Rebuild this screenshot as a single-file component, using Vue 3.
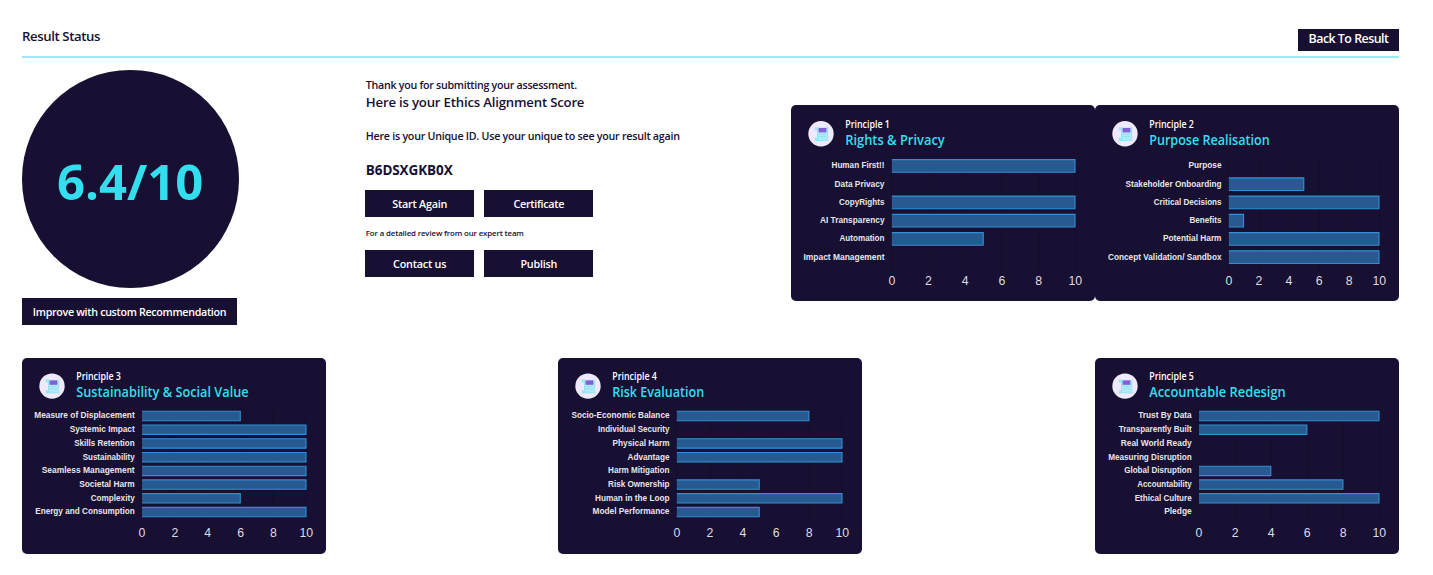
<script setup>
const ticks = [0, 2, 4, 6, 8, 10]
const END = 284.3

const rows = (pairs) => pairs.map(([label, value, width]) => ({ label, value, width }))

const principles = [
  { id: 1, title: 'Rights & Privacy', width: 99.5, start: 100.8, items: rows([
    ['Human First!!', 10, 53], ['Data Privacy', 0, 50], ['CopyRights', 10, 45.5],
    ['AI Transparency', 10, 64.5], ['Automation', 5, 45], ['Impact Management', 0, 81]]) },
  { id: 2, title: 'Purpose Realisation', width: 120.5, start: 133.8, items: rows([
    ['Purpose', 0, 33], ['Stakeholder Onboarding', 5, 96], ['Critical Decisions', 10, 67.7],
    ['Benefits', 1, 32], ['Potential Harm', 10, 58.5], ['Concept Validation/ Sandbox', 10, 113.5]]) },
  { id: 3, title: 'Sustainability & Social Value', width: 172.5, start: 120, items: rows([
    ['Measure of Displacement', 6, 100.5], ['Systemic Impact', 10, 65], ['Skills Retention', 10, 60.5],
    ['Sustainability', 10, 52], ['Seamless Management', 10, 93], ['Societal Harm', 10, 55.5],
    ['Complexity', 6, 44], ['Energy and Consumption', 10, 99.5]]) },
  { id: 4, title: 'Risk Evaluation', width: 92, start: 118.8, items: rows([
    ['Socio-Economic Balance', 8, 98], ['Individual Security', 0, 71.5], ['Physical Harm', 10, 57],
    ['Advantage', 10, 42], ['Harm Mitigation', 0, 61.5], ['Risk Ownership', 5, 61.5],
    ['Human in the Loop', 10, 74.5], ['Model Performance', 5, 77]]) },
  { id: 5, title: 'Accountable Redesign', width: 136.5, start: 104, items: rows([
    ['Trust By Data', 10, 53.5], ['Transparently Built', 6, 73], ['Real World Ready', 0, 71],
    ['Measuring Disruption', 0, 83.5], ['Global Disruption', 4, 67.5], ['Accountability', 8, 54.5],
    ['Ethical Culture', 10, 57], ['Pledge', 0, 27.5]]) },
].map((p) => {
  const dense = p.items.length > 6
  return {
    ...p,
    top: dense ? 0.6 : 0,
    first: dense ? 58.6 : 60.9,
    pitch: dense ? 13.72 : 18.25,
    thick: dense ? 9.4 : 12.6,
  }
})

const groups = [
  { name: 'upper', cards: principles.slice(0, 2) },
  { name: 'lower', cards: principles.slice(2) },
]

const px = (p, v) => p.start + ((END - p.start) * v) / 10
const cy = (p, i) => p.first + p.pitch * i
const barPath = (p, item, i) => {
  const t = cy(p, i) - p.thick / 2
  return `M${p.start} ${t}H${px(p, item.value) - 0.3}V${t + p.thick}H${p.start}`
}
</script>

<template>
  <main class="page">
    <header class="top">
      <h1><span>Result Status</span></h1>
      <button class="btn back"><span>Back To Result</span></button>
    </header>

    <div class="content">
      <section class="score">
        <div class="circle"><span>6.4/10</span></div>
        <button class="btn improve"><span>Improve with custom Recommendation</span></button>
      </section>

      <section class="info">
        <p class="thanks"><span>Thank you for submitting your assessment.</span></p>
        <p class="lead"><span>Here is your Ethics Alignment Score</span></p>
        <p class="hint"><span>Here is your Unique ID. Use your unique to see your result again</span></p>
        <p class="code"><span>B6DSXGKB0X</span></p>
        <div class="actions">
          <button class="btn start"><span>Start Again</span></button>
          <button class="btn cert"><span>Certificate</span></button>
        </div>
        <p class="review"><span>For a detailed review from our expert team</span></p>
        <div class="actions">
          <button class="btn contact"><span>Contact us</span></button>
          <button class="btn publish"><span>Publish</span></button>
        </div>
      </section>

      <section v-for="g in groups" :key="g.name" :class="g.name">
        <article v-for="p in g.cards" :key="p.id" class="card">
          <svg class="chart" width="304" height="196" :viewBox="`0 ${p.top} 304 196`">
            <circle cx="30" cy="28.7" r="12.7" fill="#f0e8fd" />
            <g>
              <path d="M24 22.3h12.4v11.2h1v2.2H26.6v-10.4H24z" fill="#b5e9f8" />
              <path d="M23.7 22.2h3v2.9h-3zM23.7 32.8h3v3h-3z" fill="#9de9f5" />
              <path d="M26.5 22.3v13.2M36.7 22.3v11.5M24 35.4h13.4" fill="none" stroke="#8fe5f2" stroke-width="1" />
              <rect x="27.6" y="23" width="7.8" height="4.4" fill="#8160d8" />
              <path d="M27.5 29.2h7.5M27.5 31.6h7.5" stroke="#93def0" stroke-width=".9" />
            </g>
            <text class="num" x="54.2" y="22.8" textLength="44.7" lengthAdjust="spacingAndGlyphs">Principle {{ p.id }}</text>
            <text class="title" x="54.2" y="39.6" :textLength="p.width" lengthAdjust="spacingAndGlyphs">{{ p.title }}</text>

            <g class="grid">
              <line v-for="t in ticks" :key="t" :x1="px(p, t)" :x2="px(p, t)" y1="52" y2="166" />
            </g>
            <g v-for="(item, i) in p.items" :key="item.label">
              <text class="label" :x="p.start - 7.3 - item.width" :y="cy(p, i) + 2.4" :textLength="item.width" lengthAdjust="spacingAndGlyphs">{{ item.label }}</text>
              <path v-if="item.value" class="bar" :d="barPath(p, item, i)" />
            </g>
            <text v-for="t in ticks" :key="'t' + t" class="tick" :x="px(p, t)" y="179.6">{{ t }}</text>
          </svg>
        </article>
      </section>
    </div>
  </main>
</template>

<style>
body { background: #fff; }
</style>

<style scoped>
* { box-sizing: border-box; }
.page {
  width: 1433px;
  height: 575px;
  padding: 28px 34px 0 22px;
  overflow: hidden;
  font-family: "Open Sans", "Noto Sans", sans-serif;
  color: #181032;
}
h1, p { margin: 0; font-weight: 600; white-space: nowrap; }
.top {
  display: flex;
  justify-content: space-between;
  height: 30px;
  border-bottom: 2px solid #98ecf1;
}
h1 { font-size: 13.2px; line-height: 17px; letter-spacing: -.4px; }
.btn {
  display: flex;
  align-items: center;
  justify-content: center;
  padding: 0;
  border: 0;
  border-radius: 0;
  background: #181032;
  color: #fff;
  font: 600 10.8px "Open Sans", "Noto Sans", sans-serif;
  letter-spacing: -.23px;
  white-space: nowrap;
}
.back { width: 101px; height: 22px; margin-top: 1px; padding-bottom: 3px; font-size: 12.4px; letter-spacing: -.5px; }
.content {
  display: grid;
  grid-template-columns: 343.3px 1fr 608px;
  grid-template-rows: 299.5px auto;
}
.score { padding-top: 12px; }
.circle {
  display: flex;
  align-items: center;
  justify-content: center;
  width: 216.5px;
  height: 217.5px;
  padding-top: 5px;
  border-radius: 50%;
  background: #181032;
  color: #33dfee;
  font-size: 49px;
  font-weight: 700;
}
.improve { width: 215px; height: 27px; margin-top: 10.7px; font-size: 10.7px; letter-spacing: -.31px; }
.info { padding-top: 18px; }
.info p { padding-left: .5px; }
.thanks { font-size: 10.7px; line-height: 18px; letter-spacing: -.29px; }
.lead { font-size: 13.2px; line-height: 17px; letter-spacing: -.2px; }
.hint { margin-top: 16px; font-size: 10.7px; line-height: 18px; letter-spacing: -.26px; }
.code { margin-top: 15px; font-size: 13.5px; line-height: 20px; letter-spacing: -.1px; }
.info .code { font-weight: 700; }
.actions { display: flex; gap: 10.5px; }
.code + .actions { margin-top: 10px; }
.actions .btn { width: 108.7px; height: 27px; }
.actions .cert { letter-spacing: -.33px; }
.review { margin: 10px 0; font-size: 7.9px; line-height: 12.5px; letter-spacing: -.15px; }
.upper { display: flex; padding-top: 47px; }
.lower { grid-column: 1 / -1; display: flex; justify-content: space-between; }
.lower .card:nth-child(2) { margin-left: -1px; }
.card {
  width: 304px;
  height: 196px;
  border-radius: 5px;
  background: #181032;
}
.chart { display: block; }
.num { fill: #fff; font-size: 9.8px; font-weight: 600; }
.title { fill: #33dfee; font-size: 13.5px; font-weight: 600; }
.label { fill: #e6e4ea; font: 700 9.6px "Liberation Sans", sans-serif; }
.tick { fill: #dedce3; font: 12.3px "Liberation Sans", sans-serif; text-anchor: middle; }
.bar { fill: #275a91; stroke: #308fd2; stroke-width: 1.1; }
.grid line { stroke: #150e2d; stroke-width: 1; }
</style>
